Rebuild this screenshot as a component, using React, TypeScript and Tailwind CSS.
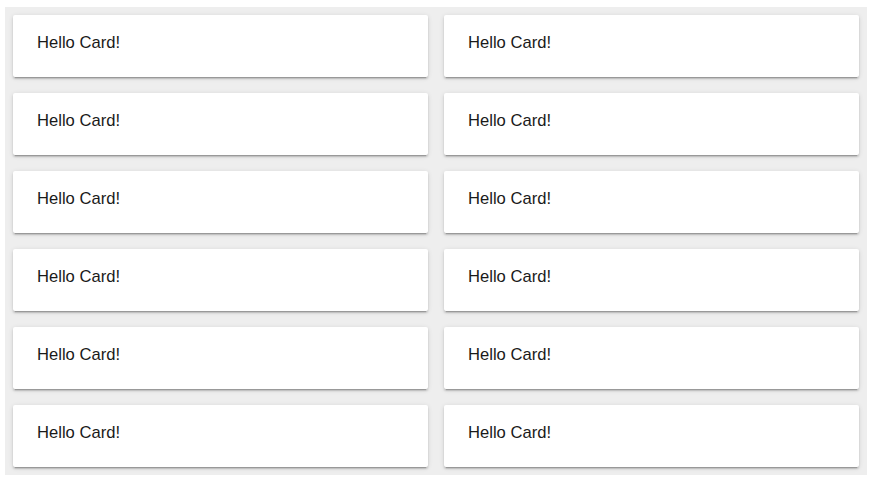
const cards = Array.from({ length: 12 }, (_, i) => ({ id: i, label: "Hello Card!" }));

function Card({ label }: { label: string }) {
  return (
    <div className="h-[62px] rounded-[2px] bg-white px-6 pt-4 text-[16.6px] leading-6 text-[#1a1a1a] shadow-[0_2px_2px_0_rgba(0,0,0,0.14),0_3px_1px_-2px_rgba(0,0,0,0.2),0_1px_5px_0_rgba(0,0,0,0.12)]">
      {label}
    </div>
  );
}

export default function App() {
  return (
    <div className="min-h-[483px] bg-white pt-[7px] pl-[5px] pr-[6px] pb-[7px] font-['Liberation_Sans',Arial,sans-serif]">
      <div className="grid grid-cols-2 gap-4 bg-[#eeeeee] p-2">
        {cards.map((c) => (
          <Card key={c.id} label={c.label} />
        ))}
      </div>
    </div>
  );
}
